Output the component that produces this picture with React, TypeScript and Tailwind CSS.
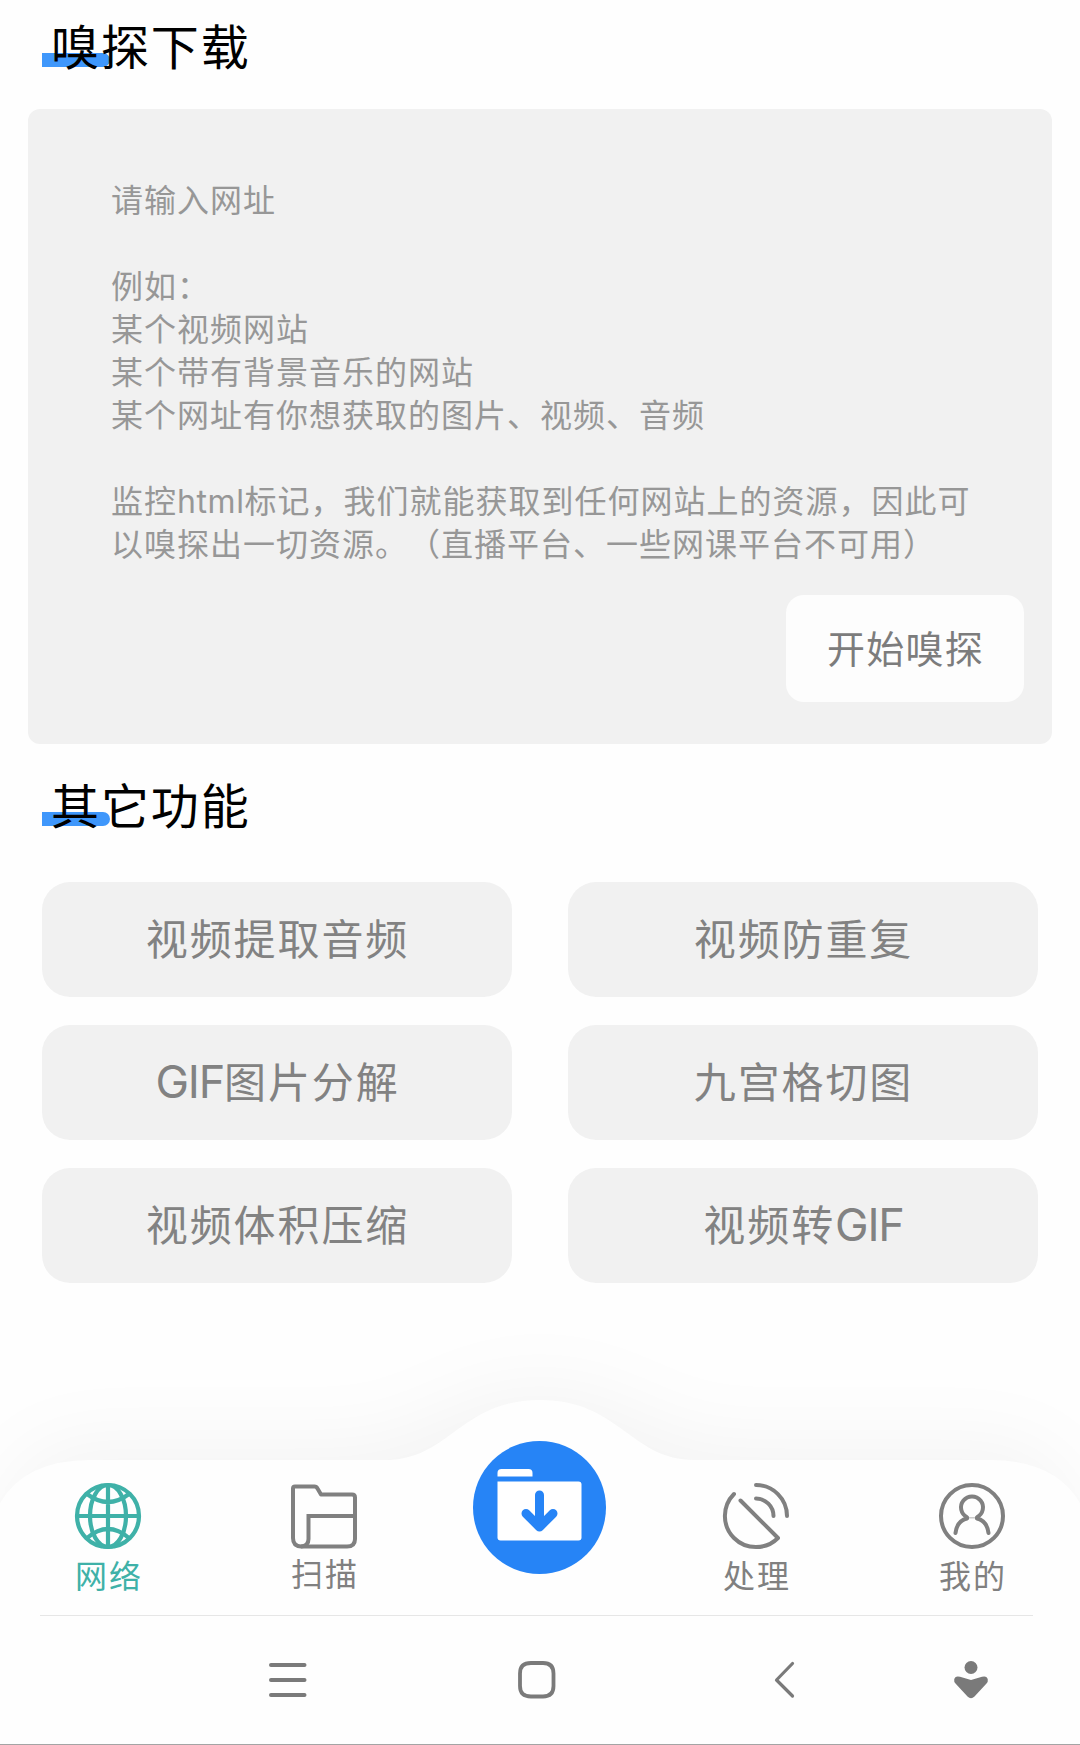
import React, { useState } from 'react';

const GRAY = '#808080';
const TEAL = '#3fb1a8';

const PLACEHOLDER = [
  '请输入网址',
  '',
  '例如：',
  '某个视频网站',
  '某个带有背景音乐的网站',
  '某个网址有你想获取的图片、视频、音频',
  '',
  '监控html标记，我们就能获取到任何网站上的资源，因此可',
  '以嗅探出一切资源。（直播平台、一些网课平台不可用）',
];

const FEATURES = ['视频提取音频', '视频防重复', 'GIF图片分解', '九宫格切图', '视频体积压缩', '视频转GIF'];

// 英文部分单独设置字号和字间距
function MixedText({ text, latinClass }: { text: string; latinClass: string }) {
  return (
    <>
      {text.split(/([A-Za-z]+)/).map((part, i) =>
        i % 2 === 1 ? (
          <span key={i} className={latinClass}>
            {part}
          </span>
        ) : (
          part
        )
      )}
    </>
  );
}

function SectionTitle({ children }: { children: React.ReactNode }) {
  return (
    <h2 className="relative h-[72px] pl-[9px] text-[48px] leading-[76px] tracking-[1.9px] text-black">
      <span className="absolute left-0 top-[43px] h-[14px] w-[68px] rounded-r-full bg-[#3f97fb]" />
      <span className="relative">{children}</span>
    </h2>
  );
}

function GlobeIcon() {
  return (
    <svg width="68" height="68" viewBox="-34 -34 68 68" fill="none" stroke={TEAL} strokeWidth="4.2">
      <circle r="31" />
      <ellipse rx="18" ry="31" />
      <path d="M0-31V31M-31 0H31M-21-22Q0-6 21-22M-21 22Q0 4 21 22" />
    </svg>
  );
}

function FolderIcon() {
  return (
    <svg width="68" height="68" viewBox="0 0 68 68" fill="none" stroke={GRAY} strokeWidth="4" strokeLinejoin="round">
      <path d="M11 64.500Q3 64 3 56V6.500Q3 4.500 5 4.500H24.500Q26.500 4.500 27.500 6.500L31 12.500H62Q65 12.500 65 15.500V57Q65 64.500 57 64.500Z" />
      <path d="M65 34H18.500V57Q18.500 64 11 64.500" strokeLinejoin="miter" />
    </svg>
  );
}

function RadarIcon() {
  return (
    <svg width="68" height="68" viewBox="-34 -34 68 68" fill="none" stroke={GRAY} strokeWidth="4" strokeLinecap="round" strokeLinejoin="round">
      <path d="M-22-22A31 31 0 0 0 22 22L-15.500-15.500" />
      <path d="M0-31A31 31 0 0 1 31 0M0-17.500A17.500 17.500 0 0 1 17.500 0" />
    </svg>
  );
}

function UserIcon() {
  return (
    <svg width="68" height="68" viewBox="-34 -34 68 68" fill="none" stroke={GRAY} strokeWidth="4" strokeLinecap="round">
      <circle r="31" />
      <path d="M-5 1.200A11 11 0 1 1 5 1.200" />
      <path d="M-16.500 17C-15.500 9-11 4-5 2.500M16.500 17C15.500 9 11 4 5 2.500" />
      <path d="M-4 1.800H4" strokeWidth="1.500" strokeOpacity="0.4" />
    </svg>
  );
}

function DownloadButton() {
  return (
    <svg width="133" height="133" viewBox="-66.500 -66.500 133 133">
      <circle r="66.500" fill="#2684f6" />
      <path d="M-42-31V-34.500Q-42-38.500-38-38.500H-11Q-7-38.500-7-34.500V-31Z" fill="#fff" />
      <path d="M-42-26H39Q42-26 42-23V30Q42 33 39 33H-39Q-42 33-42 30Z" fill="#fff" />
      <path d="M0-12.500V19M-13.500 6L0 19.500L13.500 6" fill="none" stroke="#2684f6" strokeWidth="9" strokeLinecap="round" strokeLinejoin="round" />
    </svg>
  );
}

const TABS = [
  { label: '网络', icon: <GlobeIcon /> },
  { label: '扫描', icon: <FolderIcon /> },
  { label: '', icon: null },
  { label: '处理', icon: <RadarIcon /> },
  { label: '我的', icon: <UserIcon /> },
];

export default function App() {
  const [activeTab, setActiveTab] = useState(0);

  return (
    <div className="flex h-[1745px] w-[1080px] flex-col overflow-hidden border-b border-[#a4a4a4] bg-[#fefefe] font-['Inter','Noto_Sans_CJK_SC',sans-serif] [text-spacing-trim:space-all]">
      {/* 嗅探下载 */}
      <div className="px-[42px] pt-[10px]">
        <SectionTitle>嗅探下载</SectionTitle>
      </div>
      <div className="mx-7 mt-[27px] flex h-[635px] flex-col rounded-xl bg-[#f1f1f1]">
        <div className="h-[486px] whitespace-pre pl-[83px] pt-[70px] text-[32px] leading-[43px] tracking-[1px] text-[#979797]">
          {PLACEHOLDER.map((line, i) => (
            <p key={i} className="h-[43px]">
              <MixedText text={line} latinClass="tracking-[0.6px]" />
            </p>
          ))}
        </div>
        <button className="mr-7 h-[107px] w-[238px] self-end rounded-[18px] bg-[#fdfdfd] pl-[1px] pt-[2px] text-[38px] tracking-[1.2px] text-[#7c7c7c]">
          开始嗅探
        </button>
      </div>

      {/* 其它功能 */}
      <div className="px-[42px] pt-[25px]">
        <SectionTitle>其它功能</SectionTitle>
        <div className="mt-[41px] grid grid-cols-2 gap-x-14 gap-y-7">
          {FEATURES.map((name) => (
            <button
              key={name}
              className="h-[115px] rounded-[28px] bg-[#f1f1f1] pl-[1px] text-[42px] leading-[60px] tracking-[1.9px] text-[#828282]"
            >
              <MixedText text={name} latinClass="text-[45px] tracking-[-1.2px]" />
            </button>
          ))}
        </div>
      </div>

      {/* 底部导航 */}
      <div className="relative mt-auto h-[412px]">
        <svg className="absolute inset-0 overflow-visible" width="1080" height="412" viewBox="0 0 1080 412">
          <defs>
            <filter id="shade" x="-20%" y="-60%" width="140%" height="220%">
              <feGaussianBlur stdDeviation="36" />
            </filter>
          </defs>
          <path
            d="M0 190Q25 112 90 112H340C430 112 450 56 540 56S650 112 740 112H990Q1055 112 1080 190V330H0Z"
            fill="#000"
            fillOpacity="0.038"
            filter="url(#shade)"
          />
          <path
            d="M0 171Q25 128 90 128H385C450 128 460 68 540 68S630 128 695 128H990Q1055 128 1080 171V412H0Z"
            fill="#fefefe"
          />
        </svg>
        <div className="relative flex h-[283px] pt-[150px]">
          {TABS.map((tab, i) => (
            <button
              key={i}
              onClick={() => setActiveTab(i)}
              className={`flex w-[216px] flex-col items-center ${i === activeTab ? 'text-[#3fb1a8]' : 'text-[#808080]'}`}
            >
              {tab.icon ? (
                <>
                  {tab.icon}
                  <span className={`pl-[2px] text-[32px] leading-[48px] tracking-[2px] ${i === 1 ? 'mt-px' : 'mt-[3px]'}`}>
                    {tab.label}
                  </span>
                </>
              ) : (
                <span className="-mt-[41px] mr-[2px]">
                  <DownloadButton />
                </span>
              )}
            </button>
          ))}
        </div>
        <div className="relative ml-10 mr-[47px] h-px bg-[#e6e6e6]" />
        {/* 系统导航键 */}
        <div className="relative flex pl-[267px] pt-[43px]">
          <svg width="42" height="42" viewBox="0 0 42 42" stroke="#7a7a7a" strokeWidth="4" strokeLinecap="round">
            <path d="M4 6H37.500M4 21H37.500M4 36H37.500" />
          </svg>
          <svg className="ml-[207px]" width="42" height="42" viewBox="0 0 42 42" fill="none" stroke="#7a7a7a" strokeWidth="3.800">
            <path d="M15 4H27Q37.500 4 37.500 14.500V27Q37.500 37.500 27 37.500H15Q4 37.500 4 27V14.500Q4 4 15 4Z" />
          </svg>
          <svg className="ml-[206px]" width="42" height="42" viewBox="0 0 42 42" fill="none" stroke="#7a7a7a" strokeWidth="3.200" strokeLinecap="round" strokeLinejoin="round">
            <path d="M28.500 4.500L12.500 21L28.500 37" />
          </svg>
          <svg className="ml-[144px]" width="42" height="42" viewBox="0 0 42 42" fill="#7a7a7a">
            <circle cx="21" cy="8.500" r="6.500" />
            <path d="M4.200 20.500Q5 16.500 10 17.800L21 21L32 17.800Q37 16.500 37.800 20.500Q38.200 22.500 36.500 24.500L24.500 37.500Q21 41 17.500 37.500L5.500 24.500Q3.800 22.500 4.200 20.500Z" />
          </svg>
        </div>
      </div>
    </div>
  );
}
